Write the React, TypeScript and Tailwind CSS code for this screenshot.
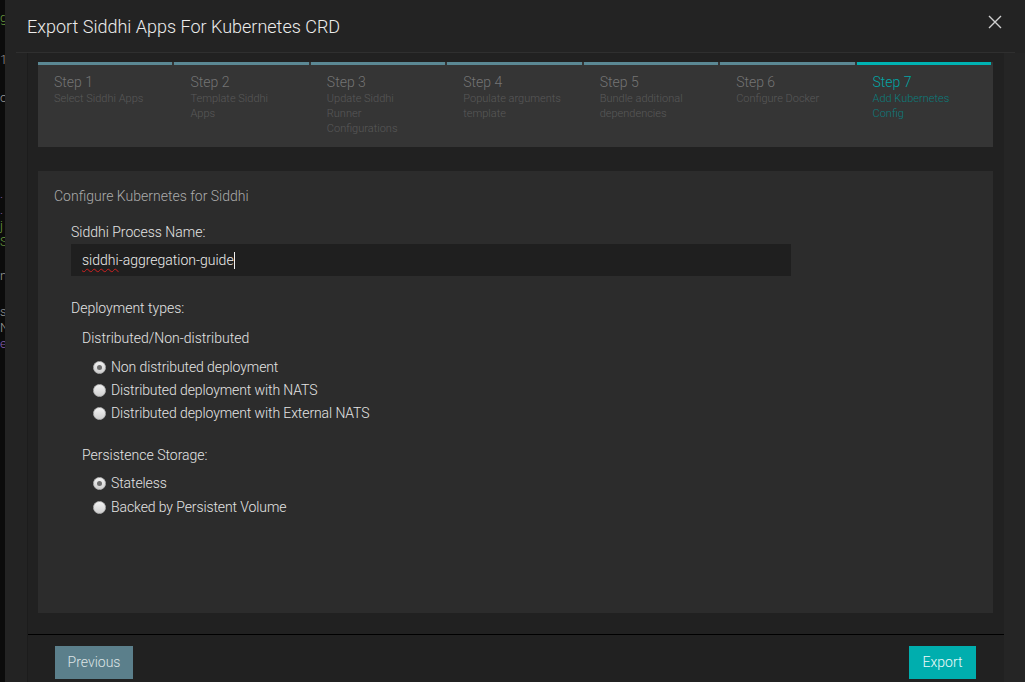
import React, { useState } from 'react';

const steps = [
  { title: 'Step 1', sub: ['Select Siddhi Apps'] },
  { title: 'Step 2', sub: ['Template Siddhi', 'Apps'] },
  { title: 'Step 3', sub: ['Update Siddhi', 'Runner', 'Configurations'] },
  { title: 'Step 4', sub: ['Populate arguments', 'template'] },
  { title: 'Step 5', sub: ['Bundle additional', 'dependencies'] },
  { title: 'Step 6', sub: ['Configure Docker'] },
  { title: 'Step 7', sub: ['Add Kubernetes', 'Config'] },
];

function Radio({ checked, label }: { checked: boolean; label: string }) {
  return (
    <div className="flex items-center h-[23px]">
      <span className="ml-[11px] w-[13px] h-[13px] rounded-full bg-gradient-to-b from-[#f2f2f2] to-[#cfcfcf] border border-[#b5b5b5] flex items-center justify-center shrink-0">
        {checked && <span className="w-[5px] h-[5px] rounded-full bg-[#6c6c6c]" />}
      </span>
      <span className="ml-[5px] text-[14px] tracking-[-0.1px] text-[#e4e4e4]">{label}</span>
    </div>
  );
}

export default function App() {
  const [deploy] = useState(0);
  const [storage] = useState(0);

  return (
    <div className="w-[1025px] h-[682px] flex bg-[#0b0b0b] overflow-hidden font-light" style={{ fontFamily: 'Roboto, "Liberation Sans", sans-serif' }}>
      {/* editor peeking out behind the modal */}
      <div className="w-[5px] shrink-0 overflow-hidden flex flex-col text-[13px] leading-[16px] text-[#9a9a9a]">
        <span className="mt-[10px] text-[#6a9a40]">g</span>
        <span className="mt-[26px]">1</span>
        <span className="mt-[22px]">o</span>
        <span className="mt-[80px] text-[#8a60b0]">.</span>
        <span className="text-[#8a60b0]">.</span>
        <span className="text-[#6a9a40]">j</span>
        <span className="text-[#6a9a40]">S</span>
        <span className="mt-[18px]">n</span>
        <span className="mt-[20px]">s</span>
        <span>N</span>
        <span className="text-[#8a60b0]">e</span>
      </div>

      {/* modal */}
      <div className="flex-1 bg-[#232323] flex flex-col">
        {/* header */}
        <div className="h-[52px] flex items-center pl-[22px] pr-[23px] shrink-0">
          <h1 className="text-[18px] text-[#ececec] flex-1 font-light">Export Siddhi Apps For Kubernetes CRD</h1>
          <svg width="14" height="14" viewBox="0 0 14 14" className="mb-[8px]">
            <path d="M1 1 L13 13 M13 1 L1 13" stroke="#d0d0d0" strokeWidth="1.4" />
          </svg>
        </div>
        <div className="h-px bg-[#2f2f2f] ml-[11px] mr-[10px] shrink-0" />

        <div className="flex-1 flex">
          <div className="ml-[22px] w-[977px] flex flex-col bg-[#212121] border-l border-[#1c1c1c]">
            <div className="flex-1 pl-[10px] pr-[11px] pt-[9px]">
              {/* stepper */}
              <div className="grid grid-cols-7 gap-x-[2px] bg-[#353535] h-[85px] pr-[2px]">
                {steps.map((s, i) => {
                  const active = i === 6;
                  return (
                    <div key={s.title} className={`border-t-[3px] ${active ? 'border-[#00b3b3]' : 'border-[#5b8894]'} pl-4 pt-[9px]`}>
                      <div className={`text-[14px] leading-[17px] ${active ? 'text-[#00a7a7]' : 'text-[#747474]'}`}>{s.title}</div>
                      {s.sub.map((l) => (
                        <div key={l} className={`text-[11px] leading-[15px] ${active ? 'text-[#0b7d7d]' : 'text-[#595959]'}`}>{l}</div>
                      ))}
                    </div>
                  );
                })}
              </div>

              {/* content */}
              <div className="mt-[24px] bg-[#2c2c2c] h-[442px] pl-4 pt-[17px]">
                <div className="text-[14px] leading-[17px] text-[#ababab]">Configure Kubernetes for Siddhi</div>
                <div className="pl-[17px]">
                  <div className="mt-[19px] text-[14px] leading-[17px] text-[#e4e4e4]">Siddhi Process Name:</div>
                  <div className="mt-[3px] w-[720px] h-[32px] bg-[#1f1f1f] flex items-center pl-[11px] text-[14px] text-[#ececec]">
                    <span className="underline decoration-wavy decoration-[#d02020] decoration-1 underline-offset-[3px]">siddhi</span>
                    <span>-aggregation-guide</span>
                    <span className="w-px h-[17px] bg-[#f0f0f0]" />
                  </div>
                  <div className="mt-[24px] text-[14px] leading-[17px] text-[#e4e4e4]">Deployment types:</div>
                  <div className="pl-[11px]">
                    <div className="mt-[13px] text-[14px] leading-[17px] text-[#e4e4e4]">Distributed/Non-distributed</div>
                    <div className="mt-[9px]">
                      <Radio checked={deploy === 0} label="Non distributed deployment" />
                      <Radio checked={deploy === 1} label="Distributed deployment with NATS" />
                      <Radio checked={deploy === 2} label="Distributed deployment with External NATS" />
                    </div>
                    <div className="mt-[22px] text-[14px] leading-[17px] text-[#e4e4e4]">Persistence Storage:</div>
                    <div className="mt-[8px] flex flex-col gap-px">
                      <Radio checked={storage === 0} label="Stateless" />
                      <Radio checked={storage === 1} label="Backed by Persistent Volume" />
                    </div>
                  </div>
                </div>
              </div>
            </div>

            {/* footer */}
            <div className="h-px bg-black mt-[21px]" />
            <div className="h-[47px] flex items-start justify-between pt-[11px] pl-[27px] pr-[28px]">
              <button className="h-[33px] w-[78px] bg-[#5b7f8b] text-[14px] text-[#dde4e6]">Previous</button>
              <button className="h-[33px] w-[67px] bg-[#00aeae] text-[14px] text-[#eefafa]">Export</button>
            </div>
          </div>
          <div className="flex-1 bg-[#252525]" />
        </div>
      </div>
    </div>
  );
}
